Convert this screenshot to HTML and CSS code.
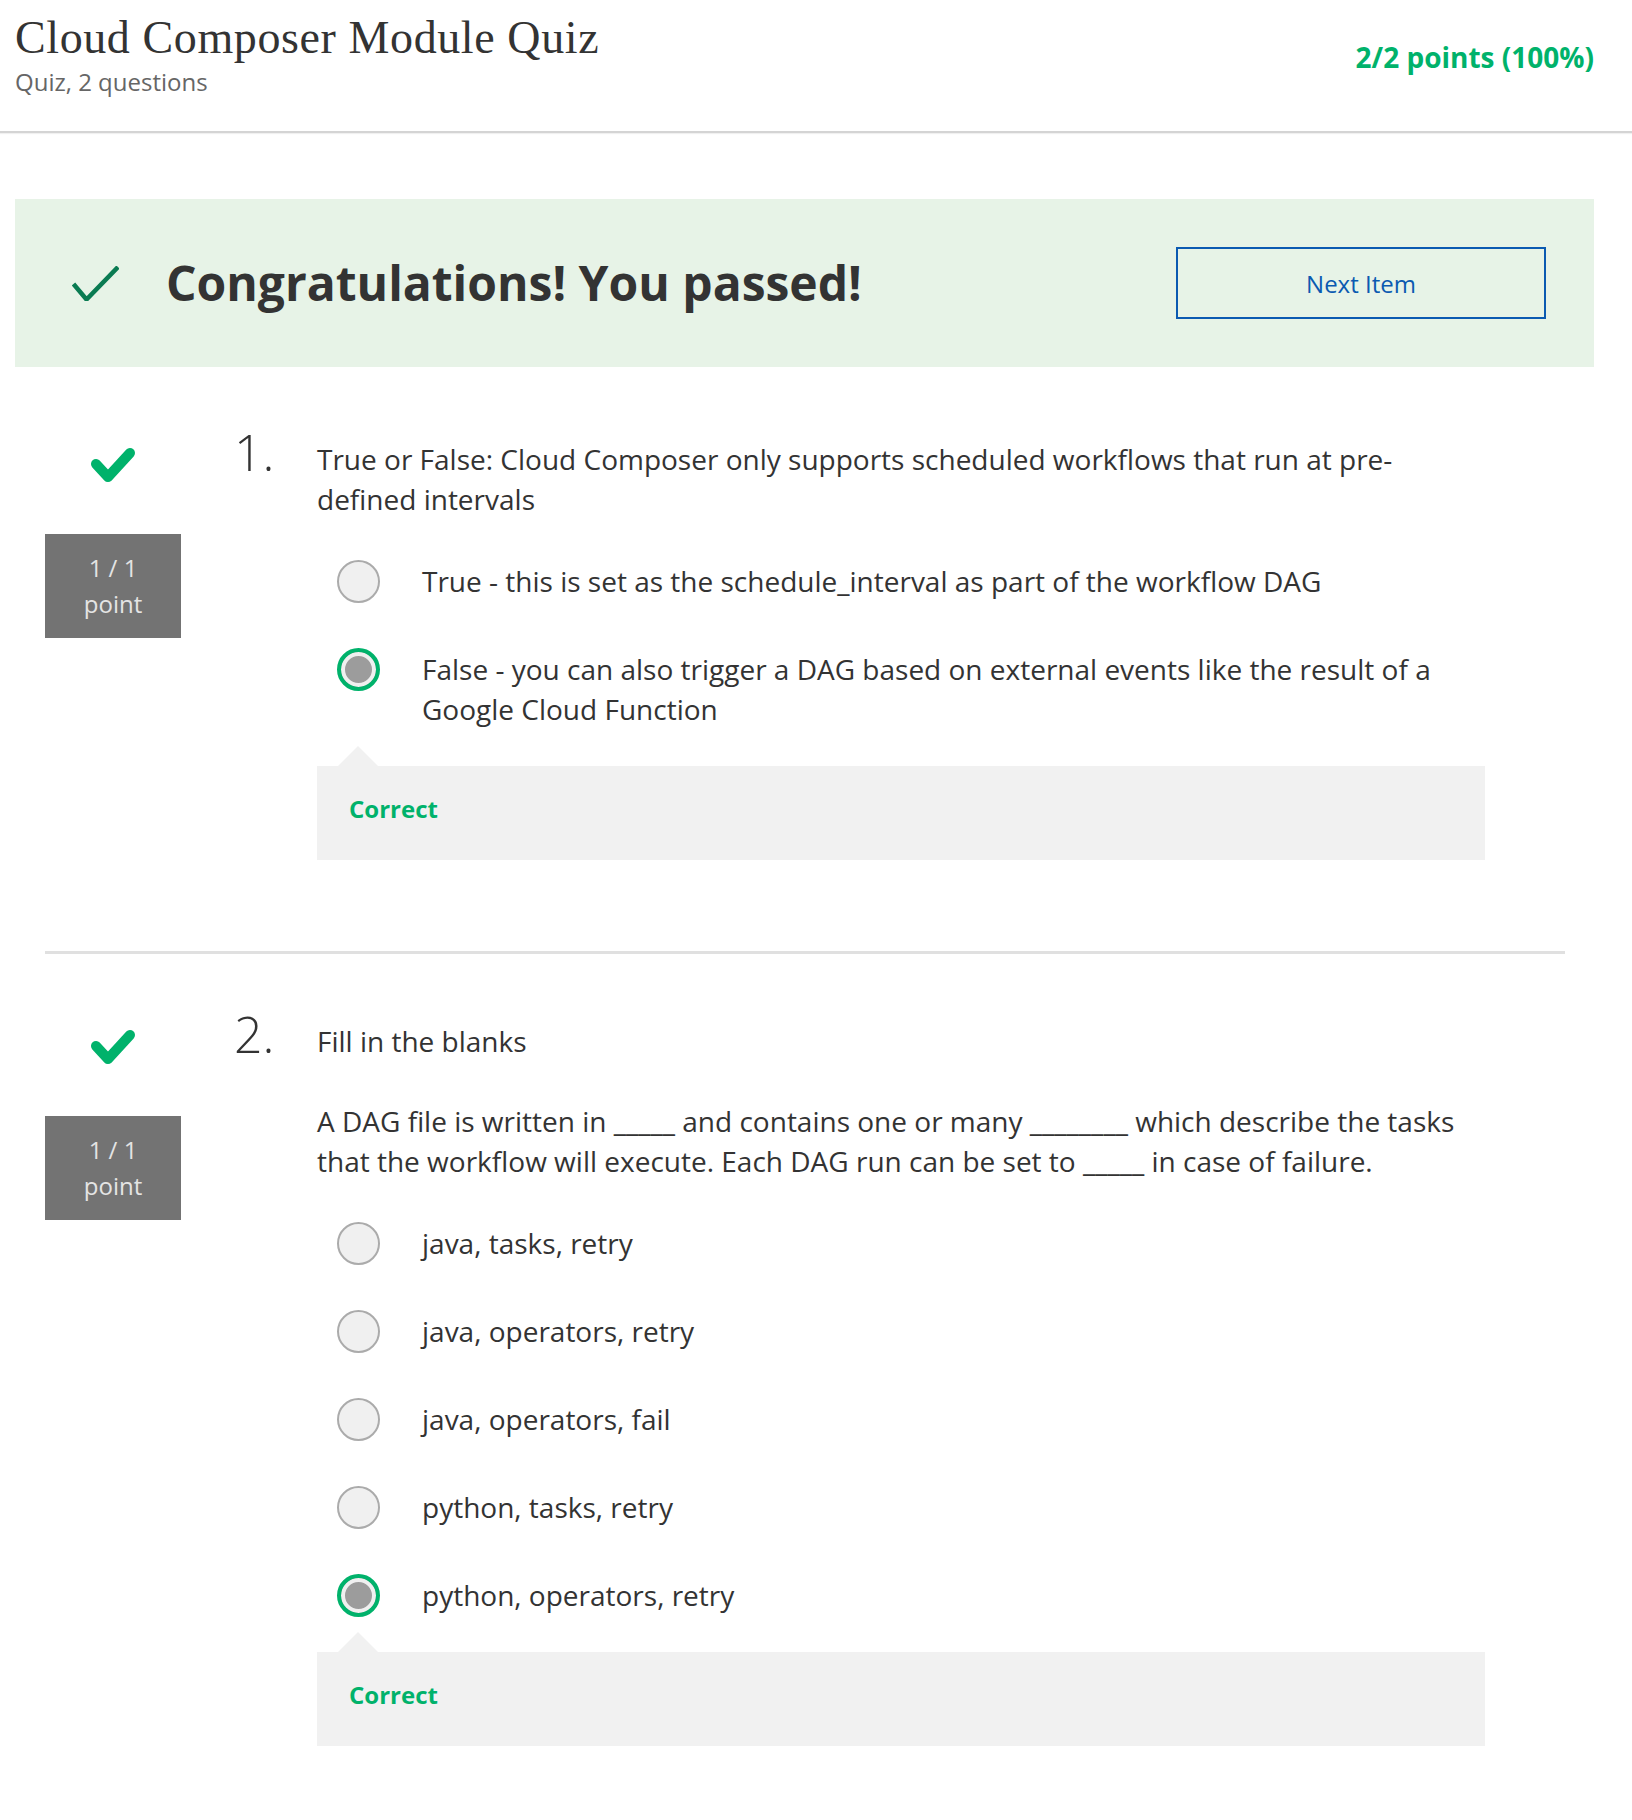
FILE: index.html
```html
<!DOCTYPE html>
<html lang="en">
<head>
<meta charset="utf-8">
<title>Cloud Composer Module Quiz</title>
<link rel="stylesheet" href="styles.css">
</head>
<body>
<header class="header">
  <div class="header-titles">
    <h1 class="title">Cloud Composer Module Quiz</h1>
    <div class="subtitle">Quiz, 2 questions</div>
  </div>
  <div class="score">2/2 points (100%)</div>
</header>

<section class="banner">
  <svg class="banner-check" width="47" height="35" viewBox="0 0 47 35" aria-hidden="true">
    <polyline points="1.5,18 14.5,33.5 46,1" fill="none" stroke="#0a7b52" stroke-width="4.5"/>
  </svg>
  <h2 class="banner-text">Congratulations! You passed!</h2>
  <button class="next-btn" type="button">Next Item</button>
</section>

<main class="questions">
  <article class="question">
    <div class="q-side">
      <svg class="q-check" width="46" height="36" viewBox="0 0 46 36" aria-hidden="true">
        <polyline points="6,17 18,30 40,6" fill="none" stroke="#00b26b" stroke-width="10" stroke-linecap="round" stroke-linejoin="round"/>
      </svg>
      <div class="points-box"><span>1 / 1</span><span>point</span></div>
    </div>
    <div class="q-num">1.</div>
    <div class="q-body">
      <p class="q-text">True or False: Cloud Composer only supports scheduled workflows that run at pre-defined intervals</p>
      <ul class="options">
        <li class="option"><span class="radio"></span><span class="opt-text">True - this is set as the schedule_interval as part of the workflow DAG</span></li>
        <li class="option"><span class="radio radio-on"></span><span class="opt-text">False - you can also trigger a DAG based on external events like the result of a Google Cloud Function</span></li>
      </ul>
      <div class="feedback">Correct</div>
    </div>
  </article>

  <hr class="divider">

  <article class="question">
    <div class="q-side">
      <svg class="q-check" width="46" height="36" viewBox="0 0 46 36" aria-hidden="true">
        <polyline points="6,17 18,30 40,6" fill="none" stroke="#00b26b" stroke-width="10" stroke-linecap="round" stroke-linejoin="round"/>
      </svg>
      <div class="points-box"><span>1 / 1</span><span>point</span></div>
    </div>
    <div class="q-num">2.</div>
    <div class="q-body">
      <p class="q-text">Fill in the blanks</p>
      <p class="q-text">A DAG file is written in _____ and contains one or many ________ which describe the tasks that the workflow will execute. Each DAG run can be set to _____ in case of failure.</p>
      <ul class="options">
        <li class="option"><span class="radio"></span><span class="opt-text">java, tasks, retry</span></li>
        <li class="option"><span class="radio"></span><span class="opt-text">java, operators, retry</span></li>
        <li class="option"><span class="radio"></span><span class="opt-text">java, operators, fail</span></li>
        <li class="option"><span class="radio"></span><span class="opt-text">python, tasks, retry</span></li>
        <li class="option"><span class="radio radio-on"></span><span class="opt-text">python, operators, retry</span></li>
      </ul>
      <div class="feedback">Correct</div>
    </div>
  </article>
</main>
</body>
</html>
```

FILE: styles.css
```css
* { box-sizing: border-box; }

body {
  margin: 0;
  background: #ffffff;
  font-family: "Open Sans", "Liberation Sans", sans-serif;
  color: #333333;
}

.header {
  display: flex;
  justify-content: space-between;
  align-items: flex-start;
  height: 133px;
  padding: 0 38px 0 15px;
  border-bottom: 2px solid #d4d4d4;
  box-shadow: 0 1px 1px rgba(0,0,0,0.06);
}

.title {
  margin: 15px 0 0 0;
  font-family: "Liberation Serif", "Times New Roman", serif;
  font-weight: 400;
  font-size: 46px;
  line-height: 46px;
  letter-spacing: 0.6px;
  color: #333333;
}

.subtitle {
  margin-top: 7px;
  font-size: 24px;
  line-height: 28px;
  color: #666666;
}

.score {
  margin-top: 41px;
  font-size: 28px;
  line-height: 32px;
  font-weight: 700;
  color: #00b26b;
}

.banner {
  display: flex;
  align-items: center;
  height: 168px;
  margin: 66px 38px 0 15px;
  padding: 0 48px 0 57px;
  background: #e7f3e7;
}

.banner-check { flex: none; }

.banner-text {
  flex: 1;
  margin: 0 0 0 47px;
  font-size: 48px;
  line-height: 56px;
  font-weight: 700;
  color: #333333;
}

.next-btn {
  flex: none;
  width: 370px;
  height: 72px;
  border: 2px solid #0b5ab1;
  background: transparent;
  color: #0b5ab1;
  font-family: "Open Sans", "Liberation Sans", sans-serif;
  font-size: 24px;
  padding: 0;
}

.questions {
  padding: 72px 67px 0 45px;
}

.question {
  display: flex;
  align-items: flex-start;
}

.q-side {
  flex: none;
  width: 136px;
  display: flex;
  flex-direction: column;
  align-items: center;
  padding-top: 8px;
}

.q-check { display: block; }

.points-box {
  margin-top: 51px;
  width: 136px;
  height: 104px;
  background: #737373;
  color: #e4e4e4;
  font-size: 24px;
  line-height: 36px;
  display: flex;
  flex-direction: column;
  align-items: center;
  justify-content: center;
}

.q-num {
  flex: none;
  width: 83px;
  margin: -7px 0 0 53px;
  font-size: 50px;
  font-weight: 300;
  line-height: 40px;
  color: #333333;
}

.q-body {
  flex: none;
  width: 1168px;
  font-size: 28px;
  line-height: 40px;
}

.q-text {
  margin: 0 0 40px 0;
}

.q-text:last-of-type { margin-bottom: 0; }

.options {
  list-style: none;
  margin: 42px 0 0 0;
  padding: 0 0 0 20px;
}

.option {
  display: flex;
  align-items: flex-start;
  margin-bottom: 48px;
}

.option:last-child { margin-bottom: 0; }

.radio {
  flex: none;
  width: 43px;
  height: 43px;
  margin: -1.5px 0 -1.5px 0;
  border-radius: 50%;
  border: 2px solid #ababab;
  background: #f0f0f0;
}

.radio-on {
  border: 4px solid #00b26b;
  background: #9c9c9c;
  box-shadow: inset 0 0 0 4px #f0f0f0;
}

.opt-text {
  margin-left: 42px;
}

.feedback {
  position: relative;
  margin-top: 37px;
  height: 94px;
  padding: 27px 0 0 32px;
  background: #f1f1f1;
  font-size: 24px;
  line-height: 32px;
  font-weight: 700;
  color: #00b26b;
}

.feedback::before {
  content: "";
  position: absolute;
  left: 21px;
  top: -20px;
  border-left: 20px solid transparent;
  border-right: 20px solid transparent;
  border-bottom: 20px solid #f1f1f1;
}

.divider {
  margin: 91px 0 67px 0;
  border: 0;
  height: 3px;
  background: #e0e0e0;
  width: 1520px;
}
```
